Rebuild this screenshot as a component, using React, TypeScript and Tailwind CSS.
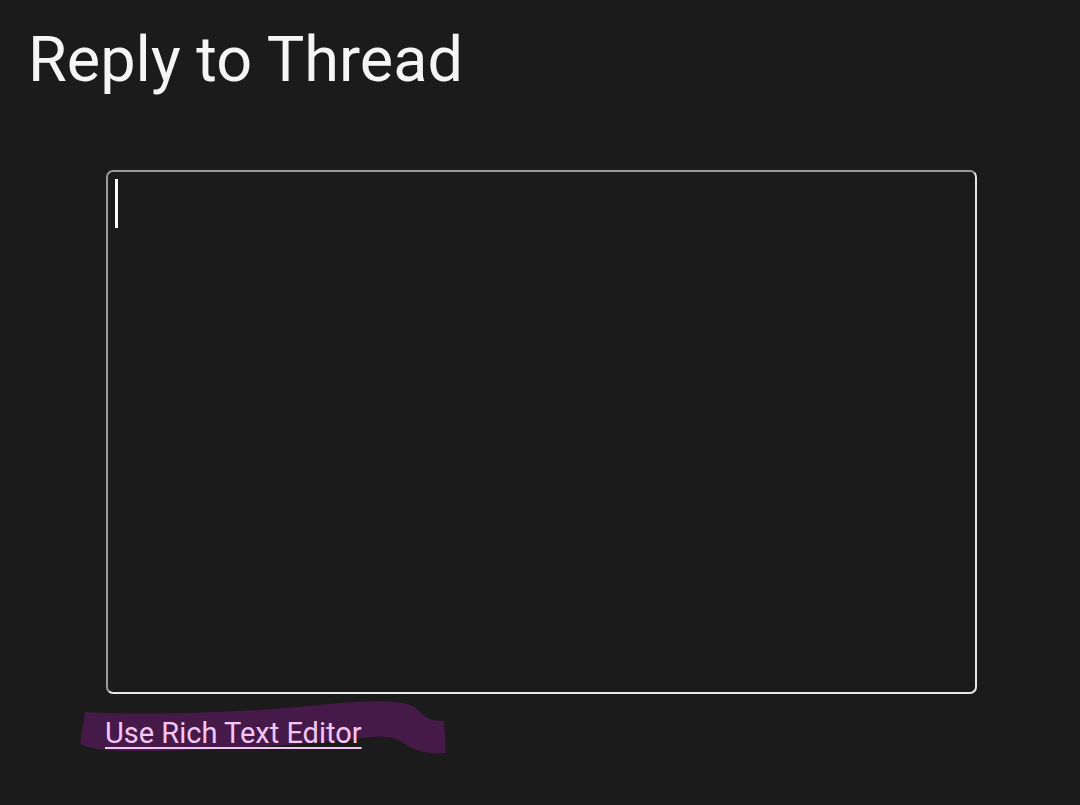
export default function App() {
  return (
    <div className="min-h-[805px] w-full bg-[#1b1b1b] font-['Roboto',_'Liberation_Sans',_sans-serif] text-[#f5f5f5]">
      <h1 className="pl-[28px] pt-[22px] text-[63px] leading-[76px] font-normal">Reply to Thread</h1>
      <div className="pl-[106px] pr-[104px] pt-[72px]">
        <div className="relative h-[524px] w-[871px] rounded-[7px] border-2 border-t-[#9a9a9a] border-l-[#9a9a9a] border-r-[#e6e6e6] border-b-[#e6e6e6]">
          <span className="absolute left-[7px] top-[7px] h-[49px] w-[3px] bg-white" />
        </div>
        <div className="relative ml-[-1px] mt-[19px] h-[40px]">
          {/* brush stroke highlight, drawn in page coordinates */}
          <svg className="absolute left-[-25px] top-[-17px]" width="370" height="60" viewBox="80 696 370 60">
            <path
              d="M85 712 C150 716 250 712 320 705 C370 700 400 700 412 706 C422 712 425 718 432 720 L444 721 L446 753 C430 754 418 752 408 746 C398 739 390 735 370 737 C300 745 200 752 120 751 C100 750 90 748 80 744 Z"
              fill="#451a48"
            />
          </svg>
          <a href="#" className="relative text-[29px] leading-[40px] text-[#f4c6f6] underline decoration-[2px] underline-offset-[4px]">
            Use Rich Text Editor
          </a>
        </div>
      </div>
    </div>
  )
}
